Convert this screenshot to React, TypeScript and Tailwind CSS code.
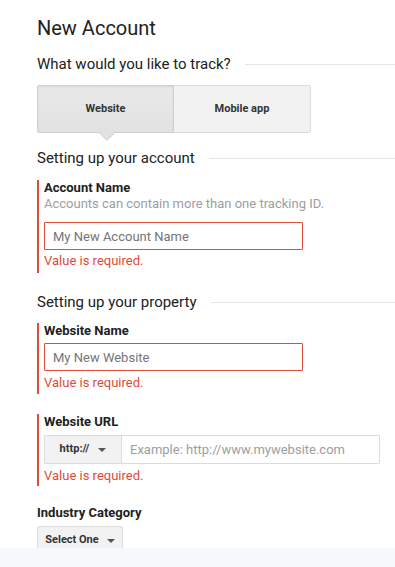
import React from 'react'

const SectionHeading = ({ text, className = '' }: { text: string; className?: string }) => (
  <div className={`flex items-center ${className}`}>
    <span className="text-[15px] leading-[20px] text-[#212121]">{text}</span>
    <div className="ml-[14px] h-px flex-1 bg-[#e5e5e5]" />
  </div>
)

const Caret = () => (
  <span className="inline-block h-0 w-0 border-x-[4px] border-t-[4px] border-x-transparent border-t-[#555]" />
)

const ErrorText = ({ className = '' }: { className?: string }) => (
  <div className={`text-[13px] leading-[16px] text-[#dd4b39] ${className}`}>Value is required.</div>
)

const Field = ({ children, className = '' }: { children: React.ReactNode; className?: string }) => (
  <div className={`border-l-2 border-[#dd4b39] pl-[5px] ${className}`}>{children}</div>
)

const App = () => {
  return (
    <div className="flex h-[567px] flex-col bg-white font-['Roboto',sans-serif]">
      <div className="h-[548px] overflow-hidden pl-[37px] pt-[16px]">
        <h1 className="text-[20px] font-normal leading-[24px] text-[#212121]">New Account</h1>

        <SectionHeading text="What would you like to track?" className="mt-[14px]" />

        <div className="mt-[11px] flex">
          <div className="relative">
            <button className="h-[48px] w-[137px] rounded-l-[2px] border border-[#d0d0d0] bg-gradient-to-b from-[#e9e9e9] to-[#e2e2e2] text-[11px] font-bold text-[#333] shadow-[inset_0_1px_2px_rgba(0,0,0,0.08)]">
              Website
            </button>
            <span className="absolute left-[62px] top-[48px] h-0 w-0 border-x-[8px] border-t-[8px] border-x-transparent border-t-[#d8d8d8]" />
            <span className="absolute left-[63px] top-[47px] h-0 w-0 border-x-[7px] border-t-[7px] border-x-transparent border-t-[#e3e3e3]" />
          </div>
          <button className="-ml-px h-[48px] w-[138px] rounded-r-[2px] border border-[#dcdcdc] bg-[#f2f2f2] text-[11px] font-bold text-[#333]">
            Mobile app
          </button>
        </div>

        <SectionHeading text="Setting up your account" className="mt-[15px]" />

        <Field className="mt-[12px] pb-[4px]">
          <div className="text-[13px] font-bold leading-[16px] text-[#212121]">Account Name</div>
          <div className="text-[13px] leading-[16px] text-[#9e9e9e]">Accounts can contain more than one tracking ID.</div>
          <input
            placeholder="My New Account Name"
            className="mt-[10px] h-[28px] w-[259px] rounded-[1px] border border-[#dd4b39] px-[8px] text-[13px] text-[#212121] outline-none placeholder:text-[#757575]"
          />
          <ErrorText className="mt-[3px]" />
        </Field>

        <SectionHeading text="Setting up your property" className="mt-[19px]" />

        <Field className="mt-[11px] pb-[3px]">
          <div className="text-[13px] font-bold leading-[16px] text-[#212121]">Website Name</div>
          <input
            placeholder="My New Website"
            className="mt-[4px] h-[28px] w-[259px] rounded-[1px] border border-[#dd4b39] px-[8px] text-[13px] text-[#212121] outline-none placeholder:text-[#757575]"
          />
          <ErrorText className="mt-[4px]" />
        </Field>

        <Field className="mt-[20px] pb-[2px]">
          <div className="text-[13px] font-bold leading-[16px] text-[#212121]">Website URL</div>
          <div className="mt-[5px] flex h-[29px] w-[336px]">
            <button className="flex h-full w-[78px] items-center justify-center gap-[9px] rounded-l-[1px] border border-[#dcdcdc] bg-[#f2f2f2] text-[11px] font-bold text-[#333]">
              http://
              <Caret />
            </button>
            <input
              placeholder="Example: http://www.mywebsite.com"
              className="-ml-px h-full flex-1 rounded-r-[1px] border border-[#dcdcdc] px-[8px] text-[13px] text-[#212121] outline-none placeholder:text-[#9e9e9e]"
            />
          </div>
          <ErrorText className="mt-[4px]" />
        </Field>

        <div className="mt-[19px] text-[13px] font-bold leading-[16px] text-[#212121]">Industry Category</div>
        <button className="mt-[5px] flex h-[29px] w-[86px] items-center justify-center gap-[8px] rounded-[2px] border border-[#dcdcdc] bg-[#f2f2f2] text-[11px] font-bold text-[#333]">
          Select One
          <Caret />
        </button>
      </div>
      <div className="flex-1 bg-[#f7f8fa]" />
    </div>
  )
}

export default App
